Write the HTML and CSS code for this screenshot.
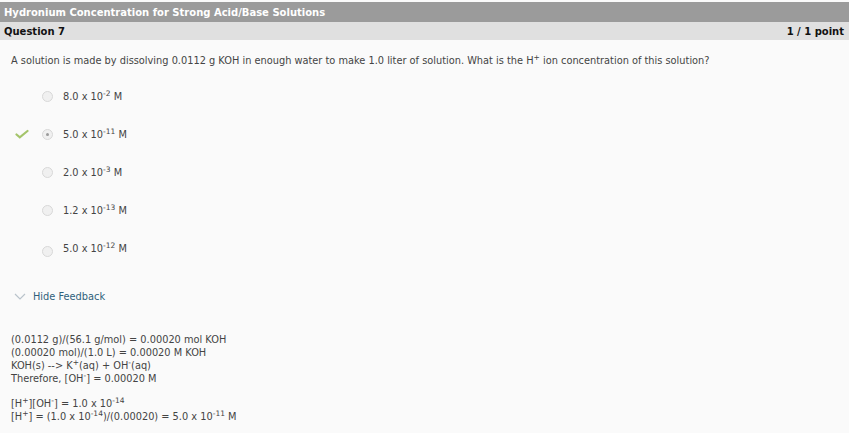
FILE: index.html
```html
<!DOCTYPE html>
<html>
<head>
<meta charset="utf-8">
<link rel="stylesheet" href="styles.css">
</head>
<body>
<div class="page">
  <div class="title-bar">Hydronium Concentration for Strong Acid/Base Solutions</div>
  <div class="q-bar"><span>Question 7</span><span>1 / 1 point</span></div>
  <div class="content">
    <p class="question">A solution is made by dissolving 0.0112 g KOH in enough water to make 1.0 liter of solution. What is the H<sup>+</sup> ion concentration of this solution?</p>
    <ul class="options">
      <li class="opt"><span class="mark"></span><span class="radio"></span><span class="label">8.0 x 10<sup>-2</sup> M</span></li>
      <li class="opt"><span class="mark"><svg width="14" height="10" viewBox="0 0 14 10"><path d="M1.5 5.5 L4.8 8.3 L12.5 2" fill="none" stroke="#a4c46a" stroke-width="2.2" stroke-linecap="round"/></svg></span><span class="radio checked"></span><span class="label">5.0 x 10<sup>-11</sup> M</span></li>
      <li class="opt"><span class="mark"></span><span class="radio"></span><span class="label">2.0 x 10<sup>-3</sup> M</span></li>
      <li class="opt"><span class="mark"></span><span class="radio"></span><span class="label">1.2 x 10<sup>-13</sup> M</span></li>
      <li class="opt last"><span class="mark"></span><span class="radio"></span><span class="label">5.0 x 10<sup>-12</sup> M</span></li>
    </ul>
    <div class="toggle"><svg class="chev" width="12" height="7" viewBox="0 0 12 7"><path d="M1 1 L6 6 L11 1" fill="none" stroke="#b9c3cb" stroke-width="1.2"/></svg><span>Hide Feedback</span></div>
    <div class="feedback">
      <p>(0.0112 g)/(56.1 g/mol) = 0.00020 mol KOH<br>(0.00020 mol)/(1.0 L) = 0.00020 M KOH<br>KOH(s) --&gt; K<sup>+</sup>(aq) + OH<sup>-</sup>(aq)<br>Therefore, [OH<sup>-</sup>] = 0.00020 M</p>
      <p>[H<sup>+</sup>][OH<sup>-</sup>] = 1.0 x 10<sup>-14</sup><br>[H<sup>+</sup>] = (1.0 x 10<sup>-14</sup>)/(0.00020) = 5.0 x 10<sup>-11</sup> M</p>
    </div>
  </div>
</div>
</body>
</html>
```
FILE: styles.css
```css
html, body { margin: 0; padding: 0; background: #ffffff; }
body { font-family: "DejaVu Sans", Verdana, sans-serif; color: #333; }
.page { width: 849px; padding-top: 2px; background: #fafafa; min-height: 431px; }
.title-bar { background: #9b9b9b; color: #fff; font-weight: bold; font-size: 10px; height: 20px; line-height: 21px; padding-left: 4px; }
.q-bar { background: #e0e0e0; color: #111; font-weight: bold; font-size: 10px; height: 18px; line-height: 19px; padding: 0 5px 0 4px; display: flex; justify-content: space-between; }
.content { padding: 0 0 0 11px; }
.question { margin: 0; padding-top: 15px; font-size: 9.8px; line-height: 12px; color: #444; }
sup { font-size: 7.5px; line-height: 0; vertical-align: 4px; }
.options { list-style: none; margin: 0; padding: 0; padding-top: 19px; }
.opt { display: flex; align-items: center; height: 20px; margin-bottom: 18px; font-size: 9.8px; color: #444; }
.mark { width: 31px; display: flex; align-items: center; padding-left: 4px; box-sizing: border-box; }
.radio { width: 11px; height: 11px; border-radius: 50%; background: #f0f0f0; border: 1px solid #d8d8d8; box-sizing: border-box; margin-right: 10px; position: relative; }
.radio.checked::after { content: ""; position: absolute; left: 3px; top: 3px; width: 3px; height: 3px; border-radius: 50%; background: #9a9a9a; }
.last .radio { margin-top: 7px; }
.toggle { display: flex; align-items: center; margin-top: 33px; font-size: 9.8px; color: #2f5f7b; }
.chev { margin: 0 7px 0 3px; }
.feedback { padding-top: 31px; font-size: 9.8px; line-height: 13px; color: #444; }
.feedback p { margin: 0 0 12px 0; }
```
